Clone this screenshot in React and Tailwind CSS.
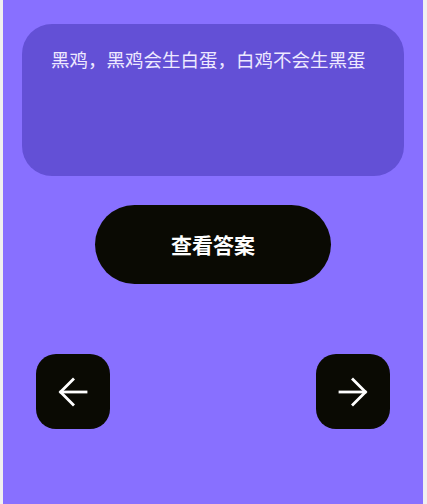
import React from "react";

function Arrow({ dir }) {
  return (
    <svg width="30" height="30" viewBox="0 0 30 30" fill="none" stroke="white" strokeWidth="2.8" strokeLinecap="square">
      {dir === "left" ? (
        <>
          <path d="M28 15H3" />
          <path d="M15 2.5L2.5 15 15 27.5" />
        </>
      ) : (
        <>
          <path d="M2 15h25" />
          <path d="M15 2.5L27.5 15 15 27.5" />
        </>
      )}
    </svg>
  );
}

export default function App() {
  return (
    <div
      className="min-h-[504px] bg-[#f0f0f0] pl-[3px] pr-[4px]"
      style={{ fontFamily: '"Noto Sans CJK SC", "Noto Sans", sans-serif' }}
    >
      <div className="min-h-[504px] bg-[#8870ff] pt-[24px]">
        <div className="mx-[19px] h-[152px] rounded-[30px] bg-[#6350d6] px-[29px] pt-[21px]">
          <p className="text-[18.5px] leading-[28px] text-[#eee9ff]">黑鸡，黑鸡会生白蛋，白鸡不会生黑蛋</p>
        </div>

        <div className="mt-[29px] flex justify-center">
          <button className="flex h-[79px] w-[236px] items-center justify-center rounded-full bg-[#0a0a03] text-[21px] font-bold text-white">
            查看答案
          </button>
        </div>

        <div className="mt-[70px] flex justify-between px-[33px]">
          <button className="flex h-[75px] w-[74px] items-center justify-center rounded-[20px] bg-[#0a0a03]">
            <Arrow dir="left" />
          </button>
          <button className="flex h-[75px] w-[74px] items-center justify-center rounded-[20px] bg-[#0a0a03]">
            <Arrow dir="right" />
          </button>
        </div>
      </div>
    </div>
  );
}
